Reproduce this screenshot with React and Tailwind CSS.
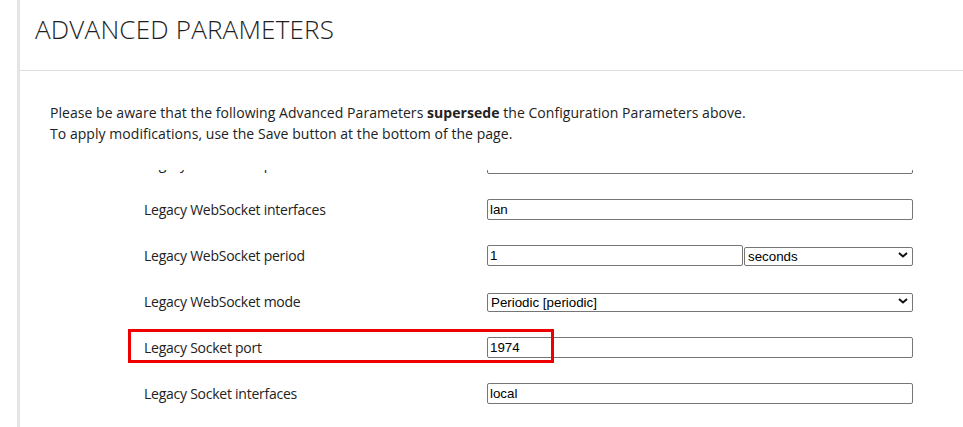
const ROWS = [
  { label: "Legacy WebSocket port", type: "text", value: "" },
  { label: "Legacy WebSocket interfaces", type: "text", value: "lan" },
  { label: "Legacy WebSocket period", type: "period", value: "1", unit: "seconds" },
  { label: "Legacy WebSocket mode", type: "select", value: "Periodic [periodic]" },
  { label: "Legacy Socket port", type: "text", value: "1974", highlight: true },
  { label: "Legacy Socket interfaces", type: "text", value: "local" },
];

function Chevron() {
  return (
    <svg width="10" height="6" viewBox="0 0 10 6" className="absolute right-[5px] top-1/2 -translate-y-1/2">
      <path d="M1 1l4 3.5L9 1" fill="none" stroke="#111" strokeWidth="2" />
    </svg>
  );
}

function Select({ value, className }) {
  return (
    <div className={"relative " + className}>
      <select
        defaultValue={value}
        className="w-full h-[19px] appearance-none bg-white border border-[#767676] rounded-[2px] pl-[3px] pr-5 text-[13.33px] leading-[15px] text-black font-['Liberation_Sans',Arial,sans-serif] outline-none"
      >
        <option>{value}</option>
      </select>
      <Chevron />
    </div>
  );
}

function TextInput({ value, className }) {
  return (
    <input
      type="text"
      defaultValue={value}
      className={
        "h-[21px] bg-white border border-[#767676] rounded-[2px] px-[2px] text-[13.33px] text-black font-['Liberation_Sans',Arial,sans-serif] outline-none " +
        className
      }
    />
  );
}

function Row({ row }) {
  return (
    <div className="relative flex items-center h-[46px]">
      {row.highlight && (
        <div className="absolute left-[108px] top-[5px] w-[426px] h-[34px] border-[3px] border-[#ee0000] pointer-events-none" />
      )}
      <div className="w-[467px] pl-[124px] text-[14px] text-[#222] font-['Open_Sans','Noto_Sans',sans-serif] tracking-[-0.25px]">
        {row.label}
      </div>
      <div className="flex items-center w-[426px]">
        {row.type === "text" && <TextInput value={row.value} className="w-full" />}
        {row.type === "period" && (
          <>
            <TextInput value={row.value} className="w-[256px]" />
            <Select value={row.unit} className="ml-[1px] w-[169px] -mt-[1px]" />
          </>
        )}
        {row.type === "select" && <Select value={row.value} className="w-full" />}
      </div>
    </div>
  );
}

export default function App() {
  return (
    <div className="h-[427px] overflow-hidden bg-white pl-[17px]">
      <div className="h-full border-l-[3px] border-[#e4e4e4]">
        <div className="h-[71px] border-b border-[#dedede] pl-[15px] pt-[14px]">
          <h1 className="text-[26px] leading-[30px] font-light text-[#1e1e1e] font-['Open_Sans',sans-serif] tracking-[0.2px]">
            ADVANCED PARAMETERS
          </h1>
        </div>
        <div className="pl-[30px] pt-[31px] text-[14px] leading-[21px] text-[#222] font-['Open_Sans','Noto_Sans',sans-serif] tracking-[0.05px]">
          <p>
            Please be aware that the following Advanced Parameters <b>supersede</b> the Configuration Parameters above.
          </p>
          <p>To apply modifications, use the Save button at the bottom of the page.</p>
        </div>
        <div className="mt-[26px] h-[257px] overflow-hidden">
          <div className="-mt-[30px]">
            {ROWS.map((row) => (
              <Row key={row.label} row={row} />
            ))}
          </div>
        </div>
      </div>
    </div>
  );
}
